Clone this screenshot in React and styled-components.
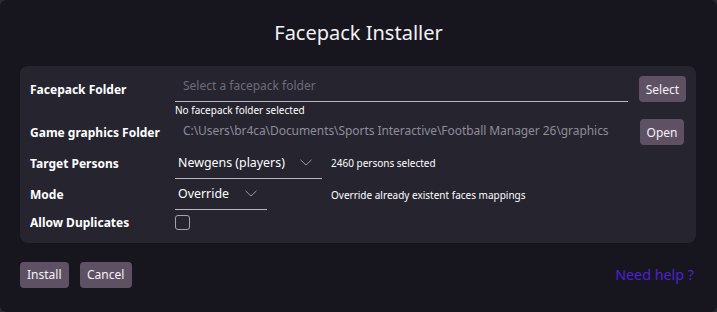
import React from "react";
import styled, { createGlobalStyle } from "styled-components";

const GlobalStyle = createGlobalStyle`
  html, body {
    margin: 0;
    padding: 0;
    background: #2c2c33;
  }
  body {
    font-family: "Noto Sans", "Open Sans", sans-serif;
  }
`;

const Window = styled.div`
  width: 717px;
  height: 312px;
  box-sizing: border-box;
  background-color: #17161f;
  border-radius: 6px;
  color: #f2f2f5;
  padding: 0 20px;
  display: flex;
  flex-direction: column;
`;

const Title = styled.h1`
  margin: 0;
  height: 66px;
  display: flex;
  align-items: center;
  justify-content: center;
  font-size: 20px;
  font-weight: 400;
  padding-bottom: 1px;
  box-sizing: border-box;
`;

const Panel = styled.div`
  background-color: #25242f;
  border-radius: 8px;
  width: 676px;
  box-sizing: border-box;
  padding: 10px 10px 0 10px;
  height: 177px;
  display: grid;
  grid-template-columns: 145px 1fr;
  grid-template-rows: 26px 15px 30px 32px 31px 24px;
  align-items: center;
`;

const Label = styled.div`
  font-size: 12px;
  font-weight: 700;
  color: #ffffff;
`;

const Row = styled.div`
  display: flex;
  align-items: center;
  align-self: stretch;
`;

const PathInput = styled.div`
  flex: 1;
  align-self: stretch;
  display: flex;
  align-items: center;
  padding: 0 8px 7px;
  border-bottom: 1px solid #b9b8c2;
  font-size: 12px;
  color: #6d6c78;
  margin-right: 11px;
`;

const PathText = styled.div`
  flex: 1;
  font-size: 12px;
  letter-spacing: -0.06px;
  color: #8e8d98;
  padding: 0 8px 3px;
  white-space: nowrap;
  overflow: hidden;
`;

const Hint = styled.div`
  grid-column: 2;
  font-size: 10px;
  color: #ffffff;
  line-height: 11px;
  padding-top: 2px;
`;

const SmallButton = styled.button`
  background-color: #5f5164;
  color: #f4f2f6;
  border: none;
  border-radius: 4px;
  height: 26px;
  padding: 0 ${(p) => p.$px || 6}px;
  margin-right: ${(p) => p.$mr || 0}px;
  font-family: "Noto Sans", sans-serif;
  font-size: 12px;
  cursor: pointer;
`;

const Select = styled.div`
  width: ${(p) => p.$w}px;
  align-self: stretch;
  box-sizing: border-box;
  display: flex;
  align-items: center;
  justify-content: space-between;
  padding: 0 10px 1px 3px;
  border-bottom: 1px solid #b9b8c2;
  font-size: 12.4px;
  color: #ffffff;
`;

const Note = styled.div`
  font-size: 10px;
  color: #ffffff;
  margin-left: ${(p) => p.$ml || 9}px;
`;

const Checkbox = styled.div`
  width: 13px;
  height: 13px;
  border: 1px solid #a3a2ad;
  border-radius: 3px;
`;

const Footer = styled.div`
  flex: 1;
  display: flex;
  align-items: center;
  justify-content: space-between;
  padding: 0 3px 6px 0;
`;

const Actions = styled.div`
  display: flex;
  gap: 11px;
`;

const HelpLink = styled.a`
  color: #5020d2;
  font-size: 14.3px;
  text-decoration: none;
  cursor: pointer;
`;

const Chevron = () => (
  <svg width="12" height="7" viewBox="0 0 12 7" fill="none">
    <path d="M0.5 0.8L6 6L11.5 0.8" stroke="#9a99a6" strokeWidth="1" />
  </svg>
);

export default function App() {
  return (
    <>
      <GlobalStyle />
      <Window>
        <Title>Facepack Installer</Title>
        <Panel>
          <Label>Facepack Folder</Label>
          <Row>
            <PathInput>Select a facepack folder</PathInput>
            <SmallButton $px={7}>Select</SmallButton>
          </Row>
          <Hint>No facepack folder selected</Hint>
          <Label>Game graphics Folder</Label>
          <Row>
            <PathText>C:\Users\br4ca\Documents\Sports Interactive\Football Manager 26\graphics</PathText>
            <SmallButton $px={6.5} $mr={2}>Open</SmallButton>
          </Row>
          <Label>Target Persons</Label>
          <Row>
            <Select $w={147}>
              Newgens (players)
              <Chevron />
            </Select>
            <Note>2460 persons selected</Note>
          </Row>
          <Label>Mode</Label>
          <Row>
            <Select $w={92}>
              Override
              <Chevron />
            </Select>
            <Note $ml={64}>Override already existent faces mappings</Note>
          </Row>
          <Label>Allow Duplicates</Label>
          <Row>
            <Checkbox />
          </Row>
        </Panel>
        <Footer>
          <Actions>
            <SmallButton $px={7}>Install</SmallButton>
            <SmallButton $px={7.5}>Cancel</SmallButton>
          </Actions>
          <HelpLink>Need help ?</HelpLink>
        </Footer>
      </Window>
    </>
  );
}
